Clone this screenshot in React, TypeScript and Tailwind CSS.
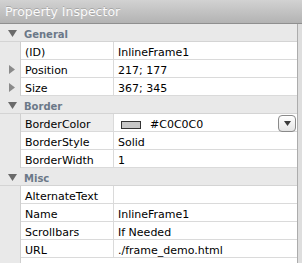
import React from "react";

type Row =
  | { kind: "h"; label: string }
  | { kind: "p"; name: string; value?: string; expand?: boolean; color?: boolean };

const rows: Row[] = [
  { kind: "h", label: "General" },
  { kind: "p", name: "(ID)", value: "InlineFrame1" },
  { kind: "p", name: "Position", value: "217; 177", expand: true },
  { kind: "p", name: "Size", value: "367; 345", expand: true },
  { kind: "h", label: "Border" },
  { kind: "p", name: "BorderColor", color: true },
  { kind: "p", name: "BorderStyle", value: "Solid" },
  { kind: "p", name: "BorderWidth", value: "1" },
  { kind: "h", label: "Misc" },
  { kind: "p", name: "AlternateText", value: "" },
  { kind: "p", name: "Name", value: "InlineFrame1" },
  { kind: "p", name: "Scrollbars", value: "If Needed" },
  { kind: "p", name: "URL", value: "./frame_demo.html" },
];

function DownTri() {
  return (
    <svg width="9" height="7" viewBox="0 0 9 7" className="block">
      <path d="M0 0 H9 L4.5 7 Z" fill="#6a6a6a" />
    </svg>
  );
}

function RightTri() {
  return (
    <svg width="6" height="9" viewBox="0 0 6 9" className="block">
      <path d="M0 0 L6 4.5 L0 9 Z" fill="#8a8a8a" />
    </svg>
  );
}

export default function App() {
  return (
    <div
      className="w-[302px] h-[263px] overflow-hidden bg-white flex flex-col text-black"
      style={{ fontFamily: '"DejaVu Sans", Verdana, sans-serif' }}
    >
      <div className="h-[24px] shrink-0 bg-gradient-to-b from-[#d2d2d2] to-[#b3b3b3] border-b border-[#8f8f8f] pl-[5px] pt-[4px]">
        <div className="text-[12.5px] leading-[15px] text-[#fbfbfb] [text-shadow:0_-1px_0_rgba(0,0,0,0.18)]">
          Property Inspector
        </div>
      </div>
      <div className="flex flex-1 min-h-0">
        <div className="w-[297px] flex flex-col">
          {rows.map((r, i) =>
            r.kind === "h" ? (
              <div
                key={i}
                className="h-[18px] shrink-0 flex bg-[#e9e9e9] border-b border-[#d4d4d4]"
              >
                <div className="w-[24px] pl-[8px] pt-[6px]">
                  <DownTri />
                </div>
                <div className="pt-[4px] text-[10px] leading-[13px] font-bold text-[#6b7888]">
                  {r.label}
                </div>
              </div>
            ) : (
              <div key={i} className="h-[18px] shrink-0 flex">
                <div className="w-[21px] bg-[#e9e9e9] border-r border-[#cfcfcf] pl-[9px] pt-[5px]">
                  {r.expand ? <RightTri /> : null}
                </div>
                <div
                  className={`w-[93px] border-b border-r border-[#dadada] pl-[4px] pt-[4px] text-[11px] leading-[13px] ${
                    r.color ? "bg-[#ededed]" : "bg-white"
                  }`}
                >
                  {r.name}
                </div>
                <div className="flex-1 relative border-b border-[#dadada] pl-[4px] pt-[4px] text-[11px] leading-[13px] whitespace-nowrap">
                  {r.color ? (
                    <div className="flex items-center pl-[3px]">
                      <div className="w-[20px] h-[8px] border border-[#333] bg-[#c6c6c6]" />
                      <span className="ml-[9px]">#C0C0C0</span>
                      <div className="absolute right-[1px] top-[1px] w-[18px] h-[17px] rounded-[4px] border border-[#8a8a8a] bg-gradient-to-b from-white to-[#e4e4e4] flex items-center justify-center">
                        <svg width="7" height="5" viewBox="0 0 7 5" className="block">
                          <path d="M0 0 H7 L3.5 5 Z" fill="#3a3a3a" />
                        </svg>
                      </div>
                    </div>
                  ) : (
                    r.value
                  )}
                </div>
              </div>
            )
          )}
          <div className="flex-1 flex">
            <div className="w-[21px] bg-[#e9e9e9] border-r border-[#cfcfcf]" />
            <div className="flex-1 bg-white" />
          </div>
        </div>
        <div className="w-[5px] bg-[#dedede] border-l border-[#acacac]" />
      </div>
    </div>
  );
}
